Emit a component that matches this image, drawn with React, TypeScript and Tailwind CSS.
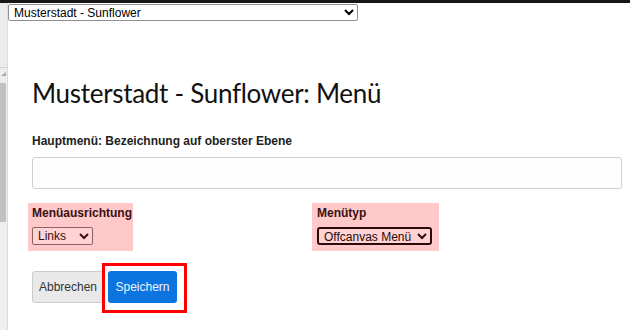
export default function App() {
  return (
    <div className="h-[330px] w-[630px] overflow-hidden bg-white font-['Liberation_Sans',Arial,sans-serif] text-black">
      <div className="h-[3px] bg-[#161616]" />
      <div className="flex h-[327px]">
        {/* left frame strip with scrollbar */}
        <div className="flex w-[8px] shrink-0 flex-col border-r border-[#dcdcdc] bg-[#ececec]">
          <div className="h-[65px] border-b border-[#d0d0d0]" />
          <div className="flex h-[12px] items-center pl-[1px]">
            <svg width="5" height="4" viewBox="0 0 5 4">
              <path d="M0 4 L5 4 L5 0 Z" fill="#a8a8a8" />
            </svg>
          </div>
          <div className="mt-[3px] h-[139px] w-[6px] bg-[#c1c1c1]" />
          <div className="flex-1 bg-[#efefef]" />
        </div>

        <div className="flex-1">
          <select className="mt-[1px] block h-[17px] w-[350px] rounded-[2px] border border-[#8f8f8f] bg-white pl-[1px] text-[12px] leading-[14px]">
            <option>Musterstadt - Sunflower</option>
          </select>

          <main className="pl-[24px] pr-[8px]">
            <h1 className="mt-[56px] h-[32px] font-['Lato',sans-serif] text-[26px] font-normal leading-[32px] tracking-[-0.3px] text-[#111]">
              Musterstadt - Sunflower: Menü
            </h1>

            <label className="mt-[25px] block h-[14px] text-[12px] font-bold leading-[14px] text-[#222]">
              Hauptmenü: Bezeichnung auf oberster Ebene
            </label>
            <input
              type="text"
              className="mt-[9px] block h-[32px] w-[590px] rounded-[3px] border border-[#cfcfcf] bg-[#fdfdfd]"
            />

            <div className="mt-[14px] grid grid-cols-[285px_1fr] items-start">
              <div className="flex items-start">
                <div className="-ml-[4px] flex flex-col bg-[#ffc9c9] pb-[6px] pl-[4px] pr-[1px] pt-[3px]">
                  <span className="h-[14px] text-[12px] font-bold leading-[14px] text-[#3a1010]">
                    Menüausrichtung
                  </span>
                  <select className="mt-[7px] h-[18px] w-[61px] rounded-[2px] border border-[#8a6262] bg-[#ffd3d3] pl-[1px] text-[12px] leading-[14px] text-[#3a1010]">
                    <option>Links</option>
                  </select>
                </div>
              </div>
              <div className="flex items-start">
                <div className="-ml-[5px] flex flex-col bg-[#ffc9c9] pb-[6px] pl-[5px] pr-[7px] pt-[3px]">
                  <span className="h-[14px] text-[12px] font-bold leading-[14px] text-[#3a1010]">
                    Menütyp
                  </span>
                  <select className="mt-[7px] h-[18px] w-[115px] rounded-[3px] border-2 border-[#2a0a0a] bg-[#ffd3d3] pl-[1px] text-[12px] leading-[14px] text-[#2a0a0a]">
                    <option>Offcanvas Menü</option>
                  </select>
                </div>
              </div>
            </div>

            <div className="mt-[20px] flex gap-[4px]">
              <button className="h-[32px] w-[72px] rounded-[3px] border border-[#cbcbcb] bg-[#e9e9e9] text-[12px] text-[#333]">
                Abbrechen
              </button>
              <div className="relative">
                <button className="h-[32px] w-[69px] rounded-[3px] bg-[#0b74de] text-[12px] text-[#eef4ff]">
                  Speichern
                </button>
                <div className="pointer-events-none absolute -bottom-[10px] -left-[6px] -right-[10px] -top-[8px] border-[3px] border-[#ff0000]" />
              </div>
            </div>
          </main>
        </div>
      </div>
    </div>
  );
}
